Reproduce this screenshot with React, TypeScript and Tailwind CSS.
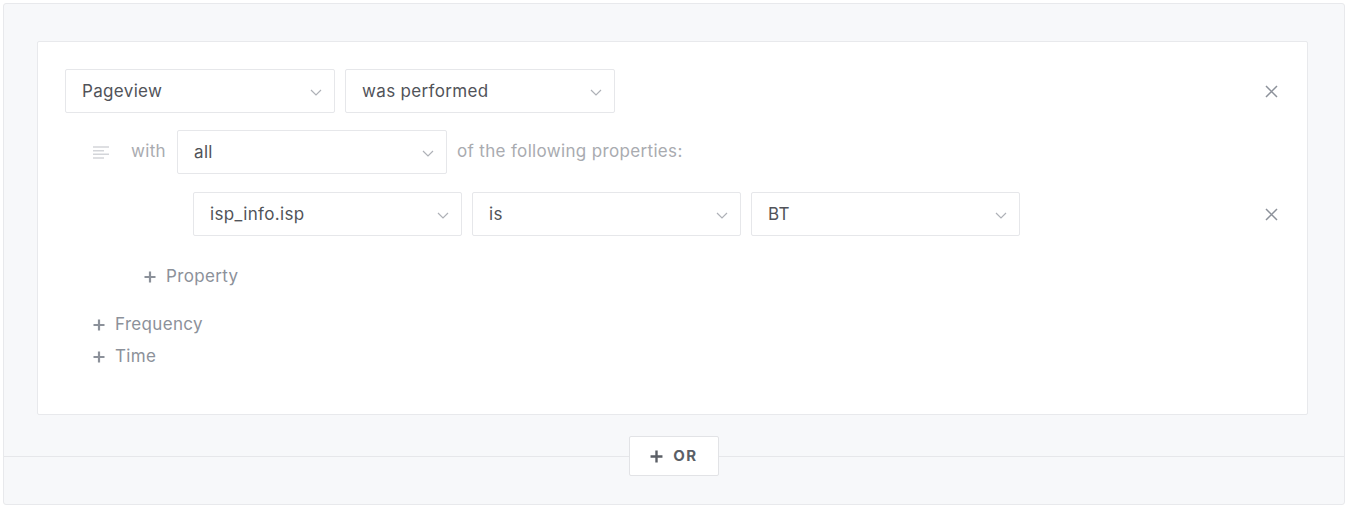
const font = { fontFamily: "Inter, 'Noto Sans', sans-serif" };

function Chevron() {
  return (
    <svg width="12" height="7" viewBox="0 0 12 7" fill="none" className="shrink-0">
      <polyline points="1,1 6,6 11,1" stroke="#aeb1b7" strokeWidth="1.2" />
    </svg>
  );
}

function PlusIcon({ color = "#8c919a", size = 12 }: { color?: string; size?: number }) {
  return (
    <svg width={size} height={size} viewBox="0 0 12 12" className="shrink-0">
      <path d="M6 0.5v11M0.5 6h11" stroke={color} strokeWidth="2.2" />
    </svg>
  );
}

function CloseIcon() {
  return (
    <svg width="13" height="13" viewBox="0 0 13 13" className="shrink-0 ml-auto">
      <path d="M1 1l11 11M12 1L1 12" stroke="#8c919a" strokeWidth="1.5" />
    </svg>
  );
}

function Select({ value, width = "w-[270px]" }: { value: string; width?: string }) {
  return (
    <div
      className={`${width} h-[44px] flex items-center justify-between pl-4 pr-3 pt-[2px] bg-white border border-[#e6e7ea] rounded-[2px] text-[#515359]`}
    >
      <span>{value}</span>
      <Chevron />
    </div>
  );
}

function AlignIcon() {
  return (
    <svg width="16" height="13" viewBox="0 0 16 13" className="shrink-0">
      <path d="M0 1h16M0 4.7h11M0 8.3h16M0 12h11" stroke="#d3d5d9" strokeWidth="1.4" />
    </svg>
  );
}

function AddLink({ label }: { label: string }) {
  return (
    <div className="flex items-center gap-[10px] h-6 text-[#8c919a]">
      <PlusIcon />
      <span>{label}</span>
    </div>
  );
}

export default function App() {
  return (
    <div className="bg-white min-h-screen pt-[3px] pl-[3px] text-[17px] tracking-[0.02em]" style={font}>
      <div className="w-[1342px] rounded-[3px] border border-[#e8e9ec] bg-[#f7f8fa] pt-[37px] pb-[28px]">
        {/* Condition card */}
        <div className="pl-[33px] pr-[36px]">
          <div className="h-[374px] bg-white border border-[#e8e9ec] rounded-[2px] pl-[27px] pr-[29px] pt-[27px]">
            {/* Event row */}
            <div className="flex items-center">
              <div className="flex gap-[10px]">
                <Select value="Pageview" />
                <Select value="was performed" />
              </div>
              <CloseIcon />
            </div>

            {/* with all of the following */}
            <div className="flex items-center mt-[17px]">
              <div className="ml-[28px]">
                <AlignIcon />
              </div>
              <span className="ml-[22px] text-[#a9abb0]">with</span>
              <div className="ml-[11px]">
                <Select value="all" />
              </div>
              <span className="ml-[10px] text-[#a9abb0]">of the following properties:</span>
            </div>

            {/* Property row */}
            <div className="flex items-center mt-[18px]">
              <div className="flex gap-[10px] ml-[128px]">
                <Select value="isp_info.isp" width="w-[269px]" />
                <Select value="is" width="w-[269px]" />
                <Select value="BT" width="w-[269px]" />
              </div>
              <CloseIcon />
            </div>

            <div className="mt-[29px] ml-[79px]">
              <AddLink label="Property" />
            </div>

            <div className="mt-[24px] ml-[28px] flex flex-col gap-2">
              <AddLink label="Frequency" />
              <AddLink label="Time" />
            </div>
          </div>
        </div>

        {/* OR divider */}
        <div className="flex items-center mt-[21px]">
          <div className="flex-1 h-px bg-[#e6e7ea]" />
          <button className="w-[90px] h-[40px] flex items-center justify-center gap-[10px] bg-white border border-[#e2e3e6] rounded-[2px] text-[15px] font-bold tracking-[0.1em] text-[#5b5f66]">
            <PlusIcon color="#5b5f66" size={13} />
            <span>OR</span>
          </button>
          <div className="flex-1 h-px bg-[#e6e7ea]" />
        </div>
      </div>
    </div>
  );
}
